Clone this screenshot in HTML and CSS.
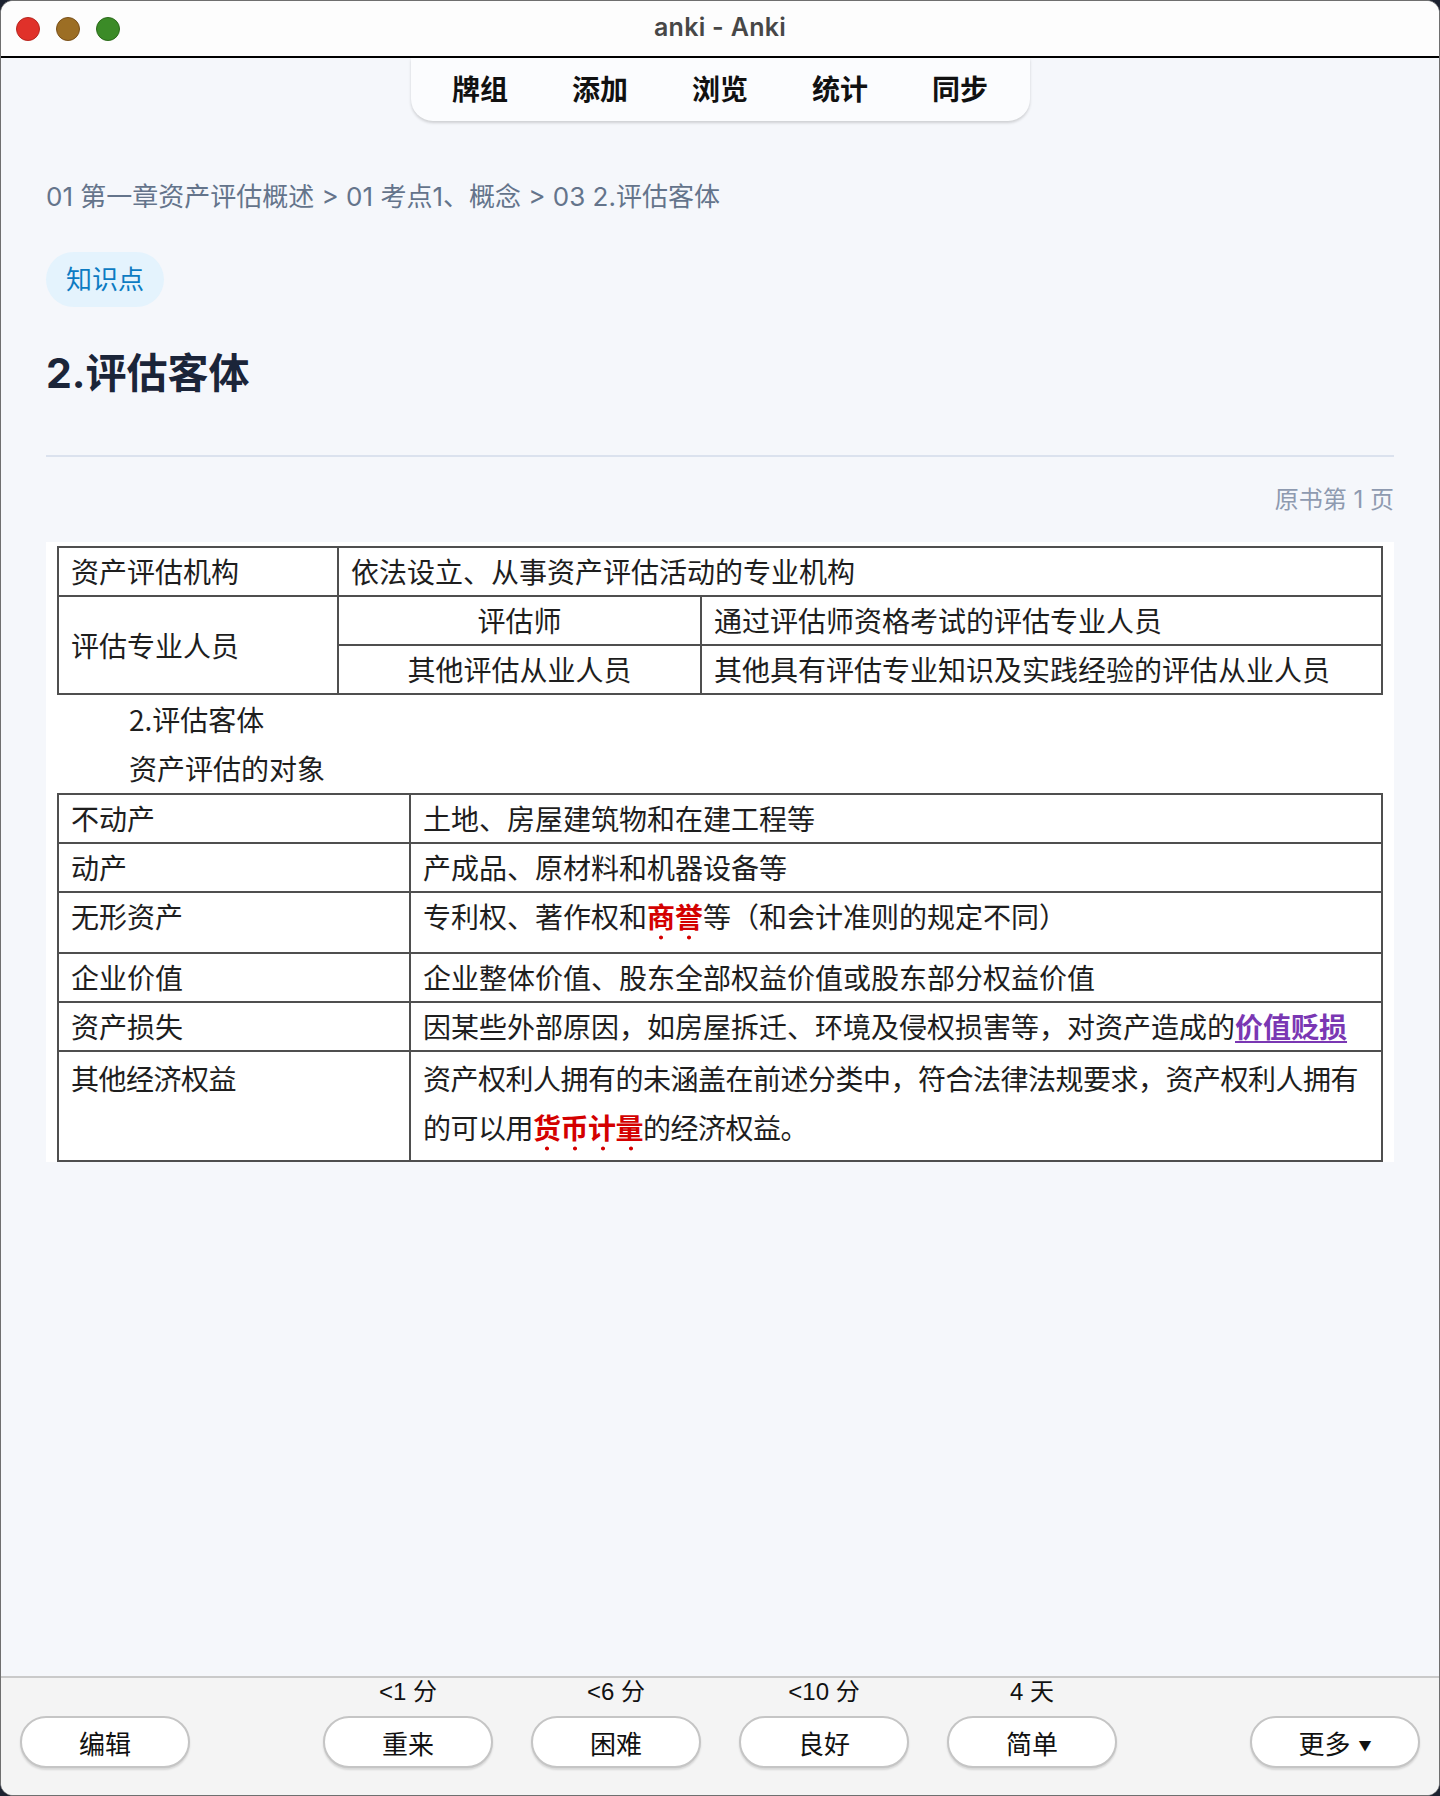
FILE: index.html
```html
<!DOCTYPE html>
<html lang="zh-CN">
<head>
    <meta charset="utf-8">
    <title>anki - Anki</title>
    <link rel="stylesheet" href="styles.css">
</head>
<body>
    <div class="window">
        <div class="titlebar">
            <div class="lights">
                <span class="light red"></span>
                <span class="light yellow"></span>
                <span class="light green"></span>
            </div>
            <div class="wintitle">anki - Anki</div>
            <div></div>
        </div>

        <div class="main">
            <nav class="toolbar">
                <a href="#">牌组</a>
                <a href="#">添加</a>
                <a href="#">浏览</a>
                <a href="#">统计</a>
                <a href="#">同步</a>
            </nav>

            <div class="card">
                <div class="crumbs">01 第一章资产评估概述 &gt; 01 考点1、概念 &gt; 03 2.评估客体</div>
                <div class="tags"><span class="tag">知识点</span></div>
                <h1 class="heading">2.评估客体</h1>
                <hr class="divider">
                <div class="page_ref">原书第 1 页</div>

                <div class="figure">
                    <table class="grid t1">
                        <colgroup>
                            <col style="width: 280px">
                            <col style="width: 363px">
                            <col>
                        </colgroup>
                        <tr>
                            <td>资产评估机构</td>
                            <td colspan="2">依法设立、从事资产评估活动的专业机构</td>
                        </tr>
                        <tr>
                            <td rowspan="2">评估专业人员</td>
                            <td class="center">评估师</td>
                            <td>通过评估师资格考试的评估专业人员</td>
                        </tr>
                        <tr>
                            <td class="center">其他评估从业人员</td>
                            <td>其他具有评估专业知识及实践经验的评估从业人员</td>
                        </tr>
                    </table>

                    <p class="para">2.评估客体</p>
                    <p class="para">资产评估的对象</p>

                    <table class="grid t2">
                        <colgroup>
                            <col style="width: 352px">
                            <col>
                        </colgroup>
                        <tr>
                            <td>不动产</td>
                            <td>土地、房屋建筑物和在建工程等</td>
                        </tr>
                        <tr>
                            <td>动产</td>
                            <td>产成品、原材料和机器设备等</td>
                        </tr>
                        <tr class="tall">
                            <td>无形资产</td>
                            <td>专利权、著作权和<b class="key">商誉</b>等（和会计准则的规定不同）</td>
                        </tr>
                        <tr>
                            <td>企业价值</td>
                            <td>企业整体价值、股东全部权益价值或股东部分权益价值</td>
                        </tr>
                        <tr>
                            <td>资产损失</td>
                            <td>因某些外部原因，如房屋拆迁、环境及侵权损害等，对资产造成的<b class="mark">价值贬损</b></td>
                        </tr>
                        <tr class="last">
                            <td>其他经济权益</td>
                            <td>资产权利人拥有的未涵盖在前述分类中，符合法律法规要求，资产权利人拥有<br>的可以用<b class="key">货币计量</b>的经济权益。</td>
                        </tr>
                    </table>
                </div>
            </div>
        </div>

        <div class="answerbar">
            <div class="side">
                <button class="btn">编辑</button>
            </div>
            <div class="ease">
                <div class="ease_item">
                    <span class="due">&lt;1 分</span>
                    <button class="btn">重来</button>
                </div>
                <div class="ease_item">
                    <span class="due">&lt;6 分</span>
                    <button class="btn">困难</button>
                </div>
                <div class="ease_item">
                    <span class="due">&lt;10 分</span>
                    <button class="btn">良好</button>
                </div>
                <div class="ease_item">
                    <span class="due">4 天</span>
                    <button class="btn">简单</button>
                </div>
            </div>
            <div class="side right">
                <button class="btn">更多<span class="caret">▼</span></button>
            </div>
        </div>
    </div>
</body>
</html>
```

FILE: styles.css
```css
html, body {
    margin: 0;
    height: 100%;
    background-color: #1c2230;
}
body {
    font-family: "Inter", "Noto Sans CJK SC", sans-serif;
}
.window {
    box-sizing: border-box;
    height: 100vh;
    display: flex;
    flex-direction: column;
    border: 1px solid #6f6f6f;
    border-radius: 13px;
    overflow: hidden;
    background-color: #f5f7fb;
}

/* 标题栏 */
.titlebar {
    height: 55px;
    flex: none;
    display: grid;
    grid-template-columns: 1fr auto 1fr;
    align-items: center;
    background-color: #fdfdfd;
    border-bottom: 2px solid #000;
}
.lights {
    display: flex;
    gap: 16px;
    padding-left: 15px;
    padding-top: 1px;
}
.light {
    width: 22px;
    height: 22px;
    border-radius: 50%;
    border: 1px solid;
}
.red { background-color: #e0312a; border-color: #b8261f; }
.yellow { background-color: #9c6e24; border-color: #7a5019; }
.green { background-color: #3b8b27; border-color: #2b6a1a; }
.wintitle {
    font-size: 25px;
    font-weight: 600;
    color: #474747;
    letter-spacing: 0.3px;
    padding-bottom: 3px;
}

/* 主区域 */
.main {
    flex: 1;
    min-height: 0;
}
.toolbar {
    width: 619px;
    height: 63px;
    box-sizing: border-box;
    margin: 0 auto;
    padding-bottom: 4px;
    display: flex;
    justify-content: center;
    align-items: center;
    gap: 64px;
    background-color: #fbfcfe;
    border-radius: 0 0 22px 22px;
    box-shadow: 0 2px 3px rgba(0, 0, 0, 0.16);
}
.toolbar a {
    font-family: "Noto Sans CJK SC", sans-serif;
    font-size: 28px;
    font-weight: 700;
    color: #111;
    text-decoration: none;
    line-height: 40px;
}

.card {
    padding: 58px 45px 0;
}
.crumbs {
    font-size: 26px;
    line-height: 36px;
    color: #64748b;
}
.tags {
    margin-top: 37px;
}
.tag {
    display: inline-block;
    height: 55px;
    line-height: 55px;
    padding: 0 20px;
    border-radius: 28px;
    background-color: #e4f3fd;
    color: #0c7bc2;
    font-size: 26px;
}
.heading {
    margin: 40px 0 0;
    font-size: 41px;
    line-height: 52px;
    font-weight: 700;
    color: #1b2539;
}
.divider {
    margin: 56px 0 0;
    height: 2px;
    border: none;
    background-color: #dbe2ee;
}
.page_ref {
    margin-top: 27px;
    text-align: right;
    font-size: 24px;
    line-height: 32px;
    color: #8e9ab0;
}

/* 图片里的表格 */
.figure {
    margin-top: 26px;
    padding: 4px 11px 0;
    background-color: #fff;
    font-family: "Noto Sans CJK SC", sans-serif;
    font-size: 28px;
    color: #1e1e1e;
}
.grid {
    width: 100%;
    border-collapse: collapse;
    table-layout: fixed;
}
.grid td {
    border: 2px solid #4f4f4f;
    padding: 0 12px;
    height: 49px;
    line-height: 47px;
    vertical-align: top;
    box-sizing: border-box;
}
.grid td[rowspan] {
    vertical-align: middle;
}
.grid .center {
    text-align: center;
}
.t2 .tall td {
    height: 61px;
}
.t2 .last td {
    height: 110px;
    line-height: 49px;
    padding-top: 2px;
    padding-right: 6px;
    letter-spacing: -0.5px;
}
.para {
    margin: 0 0 0 72px;
    line-height: 49px;
}
/* 着重号：每个字下面一个红点 */
.key {
    color: #d40000;
    padding-bottom: 5px;
    background-image: radial-gradient(circle, #d40000 1.6px, transparent 2.3px);
    background-size: 1em 7px;
    background-repeat: repeat-x;
    background-position: 0 100%;
}
.mark {
    color: #7a37b3;
    text-decoration: underline;
    text-underline-offset: 3px;
}

/* 底部答题栏 */
.answerbar {
    height: 117px;
    flex: none;
    display: flex;
    justify-content: space-between;
    border-top: 2px solid #cacaca;
    background-color: #f4f4f4;
    padding: 0 19px;
}
.side {
    width: 170px;
    padding-top: 38px;
}
.ease {
    display: flex;
    gap: 38px;
}
.ease_item {
    display: flex;
    flex-direction: column;
    align-items: center;
}
.due {
    font-family: "Liberation Sans", "Noto Sans CJK SC", sans-serif;
    font-size: 24px;
    line-height: 28px;
    color: #111;
    margin-bottom: 10px;
}
.btn {
    width: 170px;
    height: 52px;
    border: 2px solid #c5c5c5;
    border-radius: 26px;
    background-color: #fff;
    box-shadow: 0 2px 2px rgba(0, 0, 0, 0.12);
    font-family: "Noto Sans CJK SC", sans-serif;
    font-size: 26px;
    color: #111;
    padding: 0;
}
.caret {
    font-size: 13px;
    margin-left: 8px;
    vertical-align: 4px;
}
```
